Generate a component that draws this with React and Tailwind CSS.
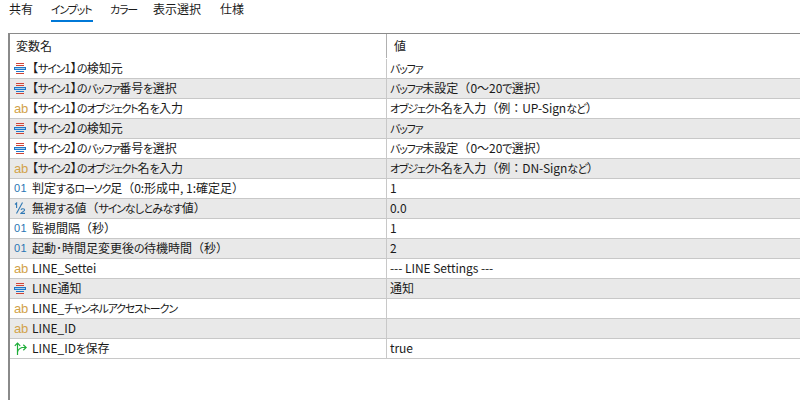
const F = { fontFamily: '"Noto Sans CJK JP","Noto Sans",sans-serif' };

function T({ text }) {
  const parts = text.match(/[\u30a0-\u30ff]+|[\u3040-\u309f]+|[A-Za-z0-9_\-:,. ]+|[^\u30a0-\u30ffA-Za-z0-9_\-:,. \u3040-\u309f]+/g) || [];
  return (
    <>
      {parts.map((p, i) => {
        let cls = "[font-feature-settings:'normal']";
        if (/^[\u30a0-\u30ff]/.test(p)) cls = "[font-feature-settings:'palt'] text-[11px] tracking-[-1.2px]";
        else if (/^[\u3040-\u309f]/.test(p)) cls = "[font-feature-settings:'palt'] text-[11px] tracking-[-0.7px]";
        else if (/^[A-Za-z0-9_\-:,. ]/.test(p)) cls = "text-[12px] tracking-[-0.05px]";
        else if (p.includes("【") || p.includes("】")) cls = "[font-feature-settings:'palt']";
        return (
          <span key={i} className={cls}>
            {p}
          </span>
        );
      })}
    </>
  );
}

function ListIcon() {
  return (
    <svg width="12" height="11" viewBox="0 0 12 11" className="shrink-0" shapeRendering="crispEdges">
      <rect x="2" y="0" width="8" height="1" fill="#d04437" />
      <rect x="2" y="2" width="8" height="1" fill="#d04437" />
      <rect x="0" y="4" width="12" height="3" fill="#1f78c8" />
      <rect x="1" y="5" width="10" height="1" fill="#a9cdec" />
      <rect x="2" y="8" width="8" height="1" fill="#1f78c8" />
      <rect x="2" y="10" width="8" height="1" fill="#d04437" />
    </svg>
  );
}

function AbIcon() {
  return (
    <span className="w-3 shrink-0 text-[13px] leading-none tracking-[-0.3px] text-[#d2a24a]" style={{ fontFamily: '"Liberation Sans",sans-serif' }}>
      ab
    </span>
  );
}

function IntIcon() {
  return (
    <span className="w-3 shrink-0 text-[11px] leading-none tracking-[0.4px] text-[#2a76b4]" style={{ fontFamily: '"Liberation Sans",sans-serif' }}>
      01
    </span>
  );
}

function HalfIcon() {
  return (
    <svg width="12" height="12" viewBox="0 0 12 12" className="shrink-0" fill="none" stroke="#2f78b4" strokeWidth="1.1">
      <path d="M1 2.5 L2.6 1 V6" />
      <path d="M8.5 0.5 L2.5 11.5" />
      <path d="M7 7.8 C7.5 6.3 10.6 6.3 10.6 8 C10.6 9.2 8 9.8 7 11.4 H11" />
    </svg>
  );
}

function BoolIcon() {
  return (
    <svg width="13" height="13" viewBox="0 0 13 13" className="shrink-0" fill="none" stroke="#1fae3a" strokeWidth="1.2">
      <path d="M3.5 13 V1" />
      <path d="M0.8 3.8 L3.5 1 L6.2 3.8" />
      <path d="M3.5 10 C3.8 7.5 6 6.3 8 5.5 H12" />
      <path d="M9.3 2.8 L12.2 5.5 L9.3 8.2" />
    </svg>
  );
}

const rows = [
  ["list", "【サイン1】の検知元", "バッファ"],
  ["list", "【サイン1】のバッファ番号を選択", "バッファ未設定（0～20で選択）"],
  ["ab", "【サイン1】のオブジェクト名を入力", "オブジェクト名を入力（例：UP-Signなど）"],
  ["list", "【サイン2】の検知元", "バッファ"],
  ["list", "【サイン2】のバッファ番号を選択", "バッファ未設定（0～20で選択）"],
  ["ab", "【サイン2】のオブジェクト名を入力", "オブジェクト名を入力（例：DN-Signなど）"],
  ["int", "判定するローソク足（0:形成中, 1:確定足）", "1"],
  ["half", "無視する値（サインなしとみなす値）", "0.0"],
  ["int", "監視間隔（秒）", "1"],
  ["int", "起動･時間足変更後の待機時間（秒）", "2"],
  ["ab", "LINE_Settei", "--- LINE Settings ---"],
  ["list", "LINE通知", "通知"],
  ["ab", "LINE_チャンネルアクセストークン", ""],
  ["ab", "LINE_ID", ""],
  ["bool", "LINE_IDを保存", "true"],
];

const icons = { list: ListIcon, ab: AbIcon, int: IntIcon, half: HalfIcon, bool: BoolIcon };

const tabs = [
  { label: "共有", cls: "w-[23px] mr-[19px]" },
  { label: "インプット", cls: "w-[42px] mr-[17px]", active: true },
  { label: "カラー", cls: "w-[24px] mr-[19px]" },
  { label: "表示選択", cls: "w-[47px] mr-[20px]" },
  { label: "仕様", cls: "w-[23px]" },
];

export default function App() {
  return (
    <div className="h-[400px] w-[800px] overflow-hidden bg-white text-[12px] text-[#1a1a1a]" style={F}>
      <div className="flex h-[33px] pl-[9px]">
        {tabs.map((t) => (
          <div key={t.label} className={`${t.cls} h-[22px] shrink-0 whitespace-nowrap border-b-2 leading-[18px] ${t.active ? "border-[#0078d7]" : "border-transparent"}`}>
            <T text={t.label} />
          </div>
        ))}
      </div>
      <div className="ml-2 h-[367px] border-l-2 border-t border-[#8a8a8a]">
        <div className="flex h-[25px] items-center pb-[1px]">
          <div className="w-[376px] shrink-0 pl-[6px]">変数名</div>
          <div className="flex h-full items-center border-l border-[#b0b0b0] pl-[7px]">値</div>
        </div>
        {rows.map(([kind, name, value], i) => {
          const Icon = icons[kind];
          return (
            <div key={name} className={`flex h-5 items-center border-b border-[#c8c8c8] ${i % 2 ? "bg-[#e9e9e9]" : "bg-white"}`}>
              <div className="flex w-[376px] shrink-0 items-center gap-[6px] whitespace-nowrap pb-[1px] pl-[4px]">
                <span className="flex w-3 shrink-0 items-center justify-center">
                  <Icon />
                </span>
                <span>
                  <T text={name} />
                </span>
              </div>
              <div className="h-full whitespace-nowrap border-l border-[#c8c8c8] pl-[3px] leading-[17px]">
                <T text={value} />
              </div>
            </div>
          );
        })}
      </div>
    </div>
  );
}
